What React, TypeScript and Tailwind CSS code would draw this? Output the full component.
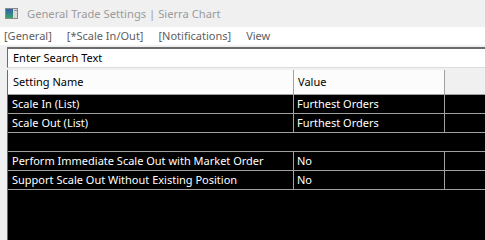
import React from 'react';

type Row = { name: string; value: string } | null;

const ROWS: Row[] = [
  { name: 'Scale In (List)', value: 'Furthest Orders' },
  { name: 'Scale Out (List)', value: 'Furthest Orders' },
  null,
  { name: 'Perform Immediate Scale Out with Market Order', value: 'No' },
  { name: 'Support Scale Out Without Existing Position', value: 'No' },
];

const MENU = ['[General]', '[*Scale In/Out]', '[Notifications]', 'View'];

const AppIcon: React.FC = () => (
  <svg width="13" height="11" viewBox="0 0 13 11">
    <defs>
      <linearGradient id="ic" x1="0" y1="0" x2="0" y2="1">
        <stop offset="0" stopColor="#2f5fa8" />
        <stop offset="1" stopColor="#3aa36a" />
      </linearGradient>
    </defs>
    <rect x="0.5" y="0.5" width="12" height="10" fill="#d8d8d8" stroke="#8a8a8a" />
    <rect x="1" y="1" width="7" height="9" fill="url(#ic)" />
    <rect x="9" y="2" width="3" height="1" fill="#9a9a9a" />
  </svg>
);

const App: React.FC = () => {
  return (
    <div
      className="w-[485px] h-[240px] overflow-hidden bg-[#f0f0f0] flex flex-col"
      style={{ fontFamily: '"Segoe UI", "Noto Sans", "Liberation Sans", sans-serif' }}
    >
      {/* title bar */}
      <div className="h-[27px] flex items-center pl-[5px] gap-[9px] shrink-0">
        <AppIcon />
        <span className="text-[11.2px] text-[#9b9b9b] leading-none">General Trade Settings | Sierra Chart</span>
      </div>

      {/* menu */}
      <div className="h-[18px] bg-white flex items-center pl-[4px] gap-[15px] text-[11px] text-[#606060] shrink-0">
        {MENU.map(m => (
          <span key={m}>{m}</span>
        ))}
      </div>
      <div className="h-[2px] shrink-0" />

      <div className="flex-1 flex flex-col pl-[7px]">
        {/* search */}
        <div className="h-[21px] bg-white border-t-2 border-l border-[#6b6b6b] border-b border-b-[#dcdcdc] flex items-center pl-[5px] text-[11px] text-black shrink-0">
          Enter Search Text
        </div>
        <div className="h-[2px] shrink-0" />

        {/* table */}
        <div className="flex-1 bg-black border-l border-[#6b6b6b] flex flex-col">
          <div className="h-[25px] flex border-b border-[#a0a0a0] text-[11px] text-black shrink-0">
            <div className="w-[286px] bg-[#fcfcfc] border-r border-[#a0a0a0] flex items-center pl-[5px]">Setting Name</div>
            <div className="w-[151px] bg-[#fcfcfc] border-r border-[#a0a0a0] flex items-center pl-[4px]">Value</div>
            <div className="flex-1 bg-[#f0f0f0]" />
          </div>
          {ROWS.map((r, i) =>
            r ? (
              <div key={i} className="h-[19px] flex border-b border-[#a0a0a0] text-[11px] text-white shrink-0">
                <div className="w-[286px] border-r border-[#a0a0a0] flex items-center pl-[4px] whitespace-nowrap overflow-hidden">{r.name}</div>
                <div className="w-[151px] border-r border-[#a0a0a0] flex items-center pl-[3px] whitespace-nowrap overflow-hidden">{r.value}</div>
                <div className="flex-1" />
              </div>
            ) : (
              <div key={i} className="h-[19px] border-b border-[#a0a0a0] shrink-0" />
            )
          )}
        </div>
      </div>
    </div>
  );
};

export default App;
